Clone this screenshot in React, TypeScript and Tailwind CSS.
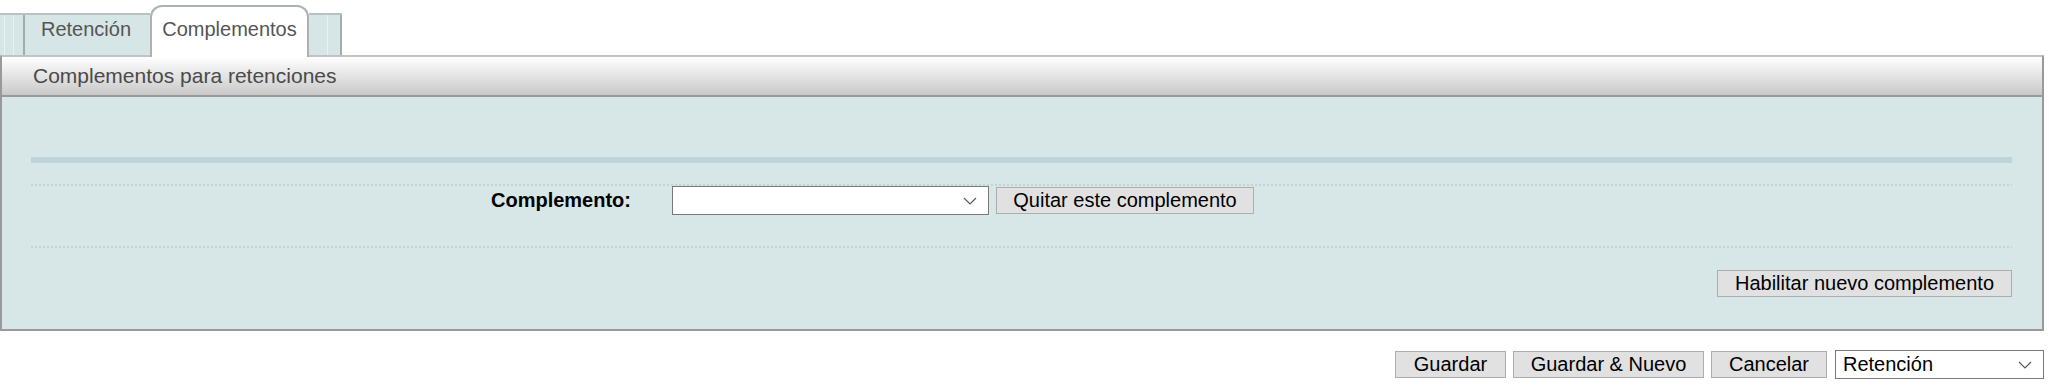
function Chevron() {
  return (
    <svg
      width="14"
      height="8"
      viewBox="0 0 14 8"
      className="pointer-events-none absolute right-[11px] top-1/2 -translate-y-1/2"
    >
      <path d="M1 1 L7 7 L13 1" fill="none" stroke="#5a5a5a" strokeWidth="1.2" />
    </svg>
  );
}

function Button({ label, width }: { label: string; width: string }) {
  return (
    <button
      type="button"
      className={`${width} h-[27px] border border-[#adadad] bg-[#e1e1e1] text-[20px] leading-[23px] text-black`}
    >
      {label}
    </button>
  );
}

function Tabs() {
  return (
    <div className="flex h-[55px] items-end">
      <div className="flex h-[42px] border-t-2 border-[#b9c2c2] bg-[#d6e5e5]">
        <div className="w-[5px] border-r border-[#e9f1f1]" />
        <div className="w-[9px] border-r border-[#e9f1f1]" />
        <div className="w-[11px] border-r-2 border-[#a3abab]" />
      </div>
      <div className="h-[42px] w-[125px] border-t-2 border-[#b9c2c2] bg-[#d6e5e5] pl-[16px] pt-[3px] text-[20px] leading-[23px] text-[#555]">
        Retención
      </div>
      <div className="relative z-10 -mb-[2px] h-[52px] w-[159px] rounded-t-[12px] border-2 border-b-0 border-[#aeb1b1] bg-white pt-[11px] text-center text-[20px] leading-[23px] text-[#555]">
        Complementos
      </div>
      <div className="flex h-[42px] border-t-2 border-[#b9c2c2] bg-[#d6e5e5]">
        <div className="w-[19px] border-r border-[#e9f1f1]" />
        <div className="w-[14px] border-r-2 border-[#a3abab]" />
      </div>
    </div>
  );
}

export default function App() {
  return (
    <div className="h-[390px] w-[2049px] overflow-hidden bg-white font-['Liberation_Sans',Arial,sans-serif] text-black">
      <Tabs />

      <section className="w-[2044px]">
        <header className="h-[42px] border-x-2 border-t-2 border-b-2 border-x-[#999] border-t-[#c2c2c2] border-b-[#999] bg-gradient-to-b from-white to-[#c9c9c9] pl-[31px] pt-[7px] text-[21px] leading-[24px] text-[#4a4a4a]">
          Complementos para retenciones
        </header>

        <div className="border-x-2 border-b-2 border-[#999] bg-[#d7e6e6] pb-[32px] pl-[29px] pr-[30px] pt-[60px]">
          <div className="h-[6px] bg-[#bfd4d6]" />
          <div className="mt-[21px] h-[2px] bg-[repeating-linear-gradient(90deg,#c4d3d5_0_2px,transparent_2px_4px)]" />

          <div className="flex items-start">
            <label className="w-[600px] pt-[3px] text-right text-[20px] font-bold leading-[23px]">
              Complemento:
            </label>
            <div className="relative ml-[41px] h-[29px] w-[317px] border border-[#7a7a7a] bg-white">
              <Chevron />
            </div>
            <div className="ml-[7px] mt-[1px]">
              <Button label="Quitar este complemento" width="w-[258px]" />
            </div>
          </div>

          <div className="mt-[31px] h-[2px] bg-[repeating-linear-gradient(90deg,#c4d3d5_0_2px,transparent_2px_4px)]" />

          <div className="mt-[22px] flex justify-end">
            <Button label="Habilitar nuevo complemento" width="w-[295px]" />
          </div>
        </div>
      </section>

      <div className="mt-[19px] flex w-[2044px] items-center justify-end gap-[7px]">
        <Button label="Guardar" width="w-[111px]" />
        <Button label="Guardar & Nuevo" width="w-[191px]" />
        <Button label="Cancelar" width="w-[116px]" />
        <div className="relative ml-[1px] h-[29px] w-[209px] border border-[#7a7a7a] bg-white pl-[7px] text-[20px] leading-[27px]">
          Retención
          <Chevron />
        </div>
      </div>
    </div>
  );
}
